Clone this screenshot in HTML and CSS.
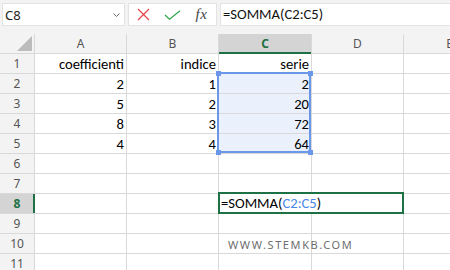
FILE: index.html
```html
<!DOCTYPE html>
<html lang="it">
<head>
    <meta charset="UTF-8">
    <meta name="viewport" content="width=device-width, initial-scale=1.0">
    <title>SOMMA</title>
    <link rel="stylesheet" href="styles.css">
</head>
<body>
    <div class="toolbar">
        <div class="name-box">
            <span>C8</span>
            <svg class="chevron" width="7" height="4" viewBox="0 0 7 4"><path d="M0.5 0.5 L3.5 3.5 L6.5 0.5" fill="none" stroke="#666" stroke-width="1"/></svg>
        </div>
        <div class="fx-box">
            <span class="slot">
                <svg width="13" height="13" viewBox="0 0 13 13"><path d="M1 1 L12 12 M12 1 L1 12" stroke="#e8474c" stroke-width="1.3" fill="none"/></svg>
            </span>
            <span class="slot">
                <svg width="17" height="10" viewBox="0 0 17 10"><path d="M1 5 L5.5 9.2 L16 0.8" stroke="#32a852" stroke-width="1.3" fill="none"/></svg>
            </span>
            <span class="slot fx">fx</span>
        </div>
        <div class="formula-input">=SOMMA(C2:C5)</div>
    </div>

    <div class="sheet-wrap">
        <div class="sheet">
            <div class="corner"><span class="tri"></span></div>
            <div class="col-head">A</div>
            <div class="col-head">B</div>
            <div class="col-head active">C</div>
            <div class="col-head">D</div>
            <div class="col-head">E</div>

            <div class="row-head">1</div>
            <div class="cell num">coefficienti</div>
            <div class="cell num">indice</div>
            <div class="cell num">serie</div>
            <div class="cell"></div>
            <div class="cell"></div>

            <div class="row-head">2</div>
            <div class="cell num">2</div>
            <div class="cell num">1</div>
            <div class="cell num sel">2</div>
            <div class="cell"></div>
            <div class="cell"></div>

            <div class="row-head">3</div>
            <div class="cell num">5</div>
            <div class="cell num">2</div>
            <div class="cell num sel">20</div>
            <div class="cell"></div>
            <div class="cell"></div>

            <div class="row-head">4</div>
            <div class="cell num">8</div>
            <div class="cell num">3</div>
            <div class="cell num sel">72</div>
            <div class="cell"></div>
            <div class="cell"></div>

            <div class="row-head">5</div>
            <div class="cell num">4</div>
            <div class="cell num">4</div>
            <div class="cell num sel">64</div>
            <div class="cell"></div>
            <div class="cell"></div>

            <div class="row-head">6</div>
            <div class="cell"></div><div class="cell"></div><div class="cell"></div><div class="cell"></div><div class="cell"></div>

            <div class="row-head">7</div>
            <div class="cell"></div><div class="cell"></div><div class="cell"></div><div class="cell"></div><div class="cell"></div>

            <div class="row-head active">8</div>
            <div class="cell"></div><div class="cell"></div><div class="cell"></div><div class="cell"></div><div class="cell"></div>

            <div class="row-head">9</div>
            <div class="cell"></div><div class="cell"></div><div class="cell"></div><div class="cell"></div><div class="cell"></div>

            <div class="row-head">10</div>
            <div class="cell"></div><div class="cell"></div><div class="cell"></div><div class="cell"></div><div class="cell"></div>

            <div class="row-head">11</div>
            <div class="cell"></div><div class="cell"></div><div class="cell"></div><div class="cell"></div><div class="cell"></div>
        </div>

        <!-- range referenced by the formula -->
        <div class="range">
            <span class="handle tl"></span>
            <span class="handle tr"></span>
            <span class="handle bl"></span>
            <span class="handle br"></span>
        </div>

        <!-- cell being edited -->
        <div class="editor">=SOMMA(<span class="ref">C2:C5</span>)</div>

        <div class="watermark">WWW.STEMKB.COM</div>
    </div>
</body>
</html>
```

FILE: styles.css
```css
body {
    margin: 0;
    width: 450px;
    height: 270px;
    overflow: hidden;
    background-color: #ffffff;
    font-family: 'Noto Sans', sans-serif;
}

/* Formula bar */
.toolbar {
    display: flex;
    height: 34px;
    padding: 3px 0 0 2px;
    box-sizing: border-box;
    background-color: #f3f3f3;
}

.name-box,
.fx-box,
.formula-input {
    height: 23px;
    box-sizing: border-box;
    background-color: #ffffff;
    border: 1px solid #e3e3e3;
}

.name-box {
    width: 123px;
    display: flex;
    align-items: center;
    justify-content: space-between;
    padding: 0 4px 0 2px;
    font-size: 13px;
    color: #222;
}

.fx-box {
    width: 89px;
    margin-left: 3px;
    display: flex;
    align-items: center;
}

.slot {
    width: 29px;
    display: flex;
    justify-content: center;
    align-items: center;
}

.fx {
    font-family: 'Liberation Serif', serif;
    font-style: italic;
    font-size: 15px;
    color: #444;
    letter-spacing: 0.5px;
}

.formula-input {
    flex: 1;
    margin-left: 3px;
    border-right: none;
    padding-left: 2px;
    font-family: Carlito, 'Liberation Sans', sans-serif;
    font-size: 14.6px;
    line-height: 21px;
    color: #111;
}

/* Grid */
.sheet-wrap {
    position: relative;
    width: 450px;
    height: 236px;
    overflow: hidden;
}

.sheet {
    display: grid;
    grid-template-columns: 34px 91px 91px 92px 91px 91px;
    grid-template-rows: 19px repeat(11, 19px);
    gap: 1px;
    background-color: #d9d9d9;
    width: 496px;
}

.corner,
.col-head,
.row-head {
    background-color: #f3f3f3;
    color: #555;
    font-size: 12px;
    display: flex;
    align-items: center;
    justify-content: center;
}

.corner {
    justify-content: flex-end;
    align-items: flex-end;
    padding: 0 2px 2px 0;
}

.tri {
    width: 0;
    height: 0;
    border-left: 15px solid transparent;
    border-bottom: 15px solid #bcbcbc;
}

.col-head.active {
    background-color: #d4d4d4;
    color: #1e7145;
    font-weight: bold;
    box-shadow: inset 0 -1px 0 #1e7145, 0 1px 0 #1e7145;
}

.row-head.active {
    background-color: #d4d4d4;
    color: #1e7145;
    font-weight: bold;
    box-shadow: inset -1px 0 0 #1e7145, 1px 0 0 #1e7145;
    z-index: 1;
}

.cell {
    background-color: #ffffff;
    font-family: Carlito, 'Liberation Sans', sans-serif;
    font-size: 14.6px;
    line-height: 16px;
    color: #000;
    display: flex;
    align-items: flex-end;
    padding: 0 2px 1px;
}

.cell.num {
    justify-content: flex-end;
}

.cell.sel {
    background-color: #ebf1fc;
}

.range {
    position: absolute;
    left: 217px;
    top: 38px;
    width: 94px;
    height: 81px;
    box-sizing: border-box;
    border: 2px solid #6a97e9;
}

.handle {
    position: absolute;
    width: 5px;
    height: 5px;
    background-color: #6a97e9;
}

.handle.tl { left: -3.5px; top: -3.5px; }
.handle.tr { right: -3.5px; top: -3.5px; }
.handle.bl { left: -3.5px; bottom: -3.5px; }
.handle.br { right: -3.5px; bottom: -3.5px; }

.editor {
    position: absolute;
    left: 218px;
    top: 158px;
    width: 186px;
    height: 22px;
    box-sizing: border-box;
    border: 2px solid #1e7145;
    background-color: #ffffff;
    font-family: Carlito, 'Liberation Sans', sans-serif;
    font-size: 14.6px;
    line-height: 18px;
    padding-left: 1px;
    color: #000;
}

.ref {
    color: #4a86e8;
}

.watermark {
    position: absolute;
    left: 228px;
    top: 203px;
    font-size: 11px;
    letter-spacing: 1.6px;
    color: #6e6e6e;
}
```
